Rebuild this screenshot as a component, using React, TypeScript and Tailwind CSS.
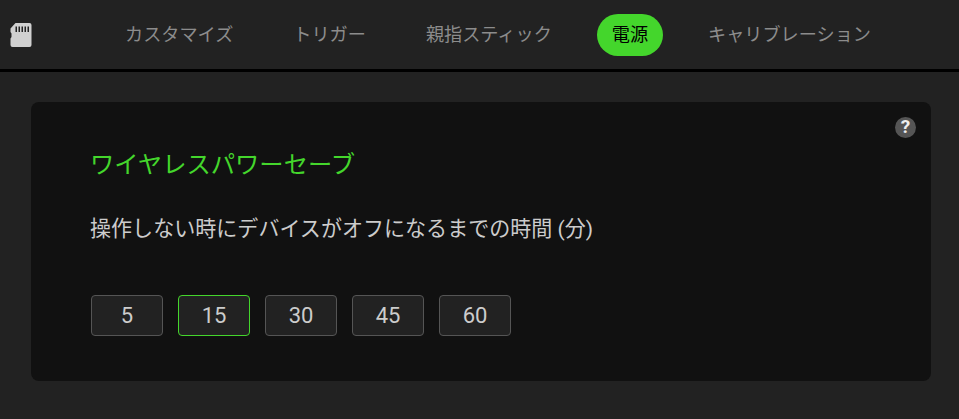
const jp = "font-['Roboto','Noto_Sans_CJK_JP',sans-serif]";

const tabs = ["カスタマイズ", "トリガー", "親指スティック", "電源", "キャリブレーション"];
const times = [5, 15, 30, 45, 60];

function CardIcon() {
  return (
    <svg width="22" height="24" viewBox="0 0 22 24" className="mt-px block">
      <path
        fill="#d0d0d0"
        d="M5.5 0H19.5A2 2 0 0 1 21.5 2V22A2 2 0 0 1 19.5 24H2.5A2 2 0 0 1 0.5 22V15.5L1.5 14V10.5L0.5 9V5.5Z"
      />
      <g fill="#222222">
        <rect x="5.5" y="3.5" width="1.5" height="5.5" />
        <rect x="8.5" y="3.5" width="1.5" height="5.5" />
        <rect x="11.5" y="3.5" width="1.5" height="5.5" />
        <rect x="14.5" y="3.5" width="1.5" height="5.5" />
        <rect x="17.5" y="3.5" width="1.5" height="5.5" />
      </g>
    </svg>
  );
}

export default function App() {
  return (
    <div className={`${jp} h-[419px] w-[959px] overflow-hidden bg-[#222222]`}>
      <header className="flex h-[72px] items-center border-b-[3px] border-black pl-[10px]">
        <div className="w-[100px] shrink-0">
          <CardIcon />
        </div>
        <nav className="flex items-center gap-[30px]">
          {tabs.map((t) => (
            <div
              key={t}
              className={
                t === "電源"
                  ? "flex h-[42px] items-center rounded-[21px] bg-[#44d62c] px-[15px] text-[18.15px] text-black"
                  : "flex h-[42px] items-center px-[15px] text-[18.15px] text-[#8c8c8c]"
              }
            >
              {t}
            </div>
          ))}
        </nav>
      </header>
      <main className="px-[31px] pt-[30px]">
        <section className="relative h-[279px] w-[900px] rounded-lg bg-[#111111] px-[60px] pt-[45px]">
          <div className="absolute right-[15px] top-[15px] flex h-[21px] w-[21px] items-center justify-center rounded-full bg-[#555555] text-[19px] font-bold text-[#eeeeee]">
            ?
          </div>
          <h2 className="-ml-px text-[24.3px] leading-[36px] text-[#44d62c]">ワイヤレスパワーセーブ</h2>
          <p className="-ml-px mt-[31px] text-[21.05px] leading-[30px] text-[#cccccc]">
            操作しない時にデバイスがオフになるまでの時間 (分)
          </p>
          <div className="mt-[51px] flex gap-[15px]">
            {times.map((n) => (
              <div
                key={n}
                className={
                  n === 15
                    ? "flex h-[41px] w-[72px] items-center justify-center rounded-[4px] border border-[#44d62c] bg-[#222222] text-[22px] text-[#cccccc]"
                    : "flex h-[41px] w-[72px] items-center justify-center rounded-[4px] border border-[#555555] bg-[#222222] text-[22px] text-[#cccccc]"
                }
              >
                {n}
              </div>
            ))}
          </div>
        </section>
      </main>
    </div>
  );
}
